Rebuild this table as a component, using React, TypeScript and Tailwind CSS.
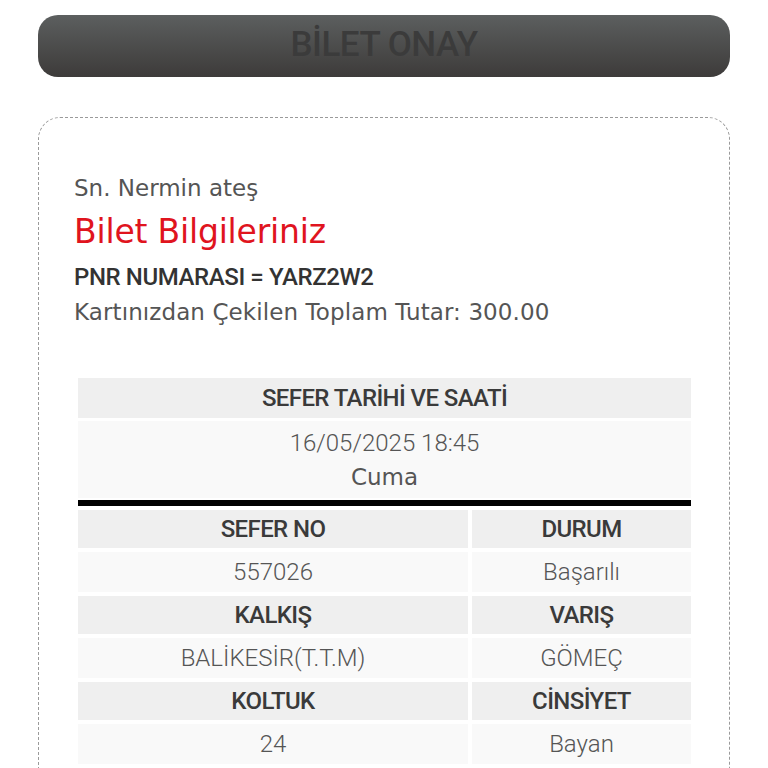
import React from "react";

const RB = { fontFamily: "Roboto, sans-serif" };

const Head = ({ children, span, tall }: { children: React.ReactNode; span?: boolean; tall?: boolean }) => (
  <div
    className={`${tall ? "h-[40px]" : "h-[38px]"} bg-[#efefef] flex items-center justify-center text-[#3a3a3a] ${span ? "col-span-2" : ""}`}
  >
    <span className="text-[24px] font-medium tracking-[-0.6px] whitespace-nowrap" style={RB}>
      {children}
    </span>
  </div>
);

const Val = ({ children }: { children: React.ReactNode }) => (
  <div className="h-[40px] bg-[#f9f9f9] flex items-center justify-center text-[#555]">
    <span className="text-[24px] font-light whitespace-nowrap" style={RB}>
      {children}
    </span>
  </div>
);

export default function App() {
  return (
    <div className="w-[768px] h-[768px] overflow-hidden bg-white" style={{ fontFamily: "'DejaVu Sans', sans-serif" }}>
      <div className="pt-[15px] px-[38px]">
        <div className="h-[62px] rounded-[20px] bg-gradient-to-b from-[#5c5f5f] to-[#3d3b3a] flex items-center justify-center">
          <span className="text-[35px] font-medium text-[#3b3b3b] tracking-[-0.5px] -mt-[2px]" style={RB}>
            BİLET ONAY
          </span>
        </div>
        <div className="mt-[40px] h-[700px] rounded-[22px] border border-dashed border-[#9a9a9a] pl-[35px] pr-[38px] pt-[55px]">
          <div className="text-[23px] leading-[30px] text-[#555]">Sn. Nermin ateş</div>
          <div className="mt-[9px] text-[33px] leading-[40px] text-[#e0141e] tracking-[-0.2px]">Bilet Bilgileriniz</div>
          <div className="mt-[10px] text-[24px] leading-[30px] text-[#333] font-medium tracking-[-0.4px]" style={RB}>PNR NUMARASI = YARZ2W2</div>
          <div className="mt-[5px] text-[23px] leading-[30px] text-[#555] tracking-[0.1px]">Kartınızdan Çekilen Toplam Tutar: 300.00</div>

          <div className="mt-[51px] ml-[4px] w-[613px]">
            <Head span tall>SEFER TARİHİ VE SAATİ</Head>
            <div className="mt-[3px] h-[77px] bg-[#f9f9f9] flex flex-col items-center justify-center text-[#555]">
              <span className="text-[24px] font-light leading-[34px]" style={RB}>16/05/2025 18:45</span>
              <span className="text-[23px] leading-[34px]">Cuma</span>
            </div>
            <div className="mt-[2px] h-[6px] bg-black" />
            <div className="mt-[4px] grid grid-cols-[390px_219px] gap-[4px]">
              <Head>SEFER NO</Head>
              <Head>DURUM</Head>
              <Val>557026</Val>
              <Val>Başarılı</Val>
              <Head>KALKIŞ</Head>
              <Head>VARIŞ</Head>
              <Val>BALİKESİR(T.T.M)</Val>
              <Val>GÖMEÇ</Val>
              <Head>KOLTUK</Head>
              <Head>CİNSİYET</Head>
              <Val>24</Val>
              <Val>Bayan</Val>
            </div>
          </div>
        </div>
      </div>
    </div>
  );
}
